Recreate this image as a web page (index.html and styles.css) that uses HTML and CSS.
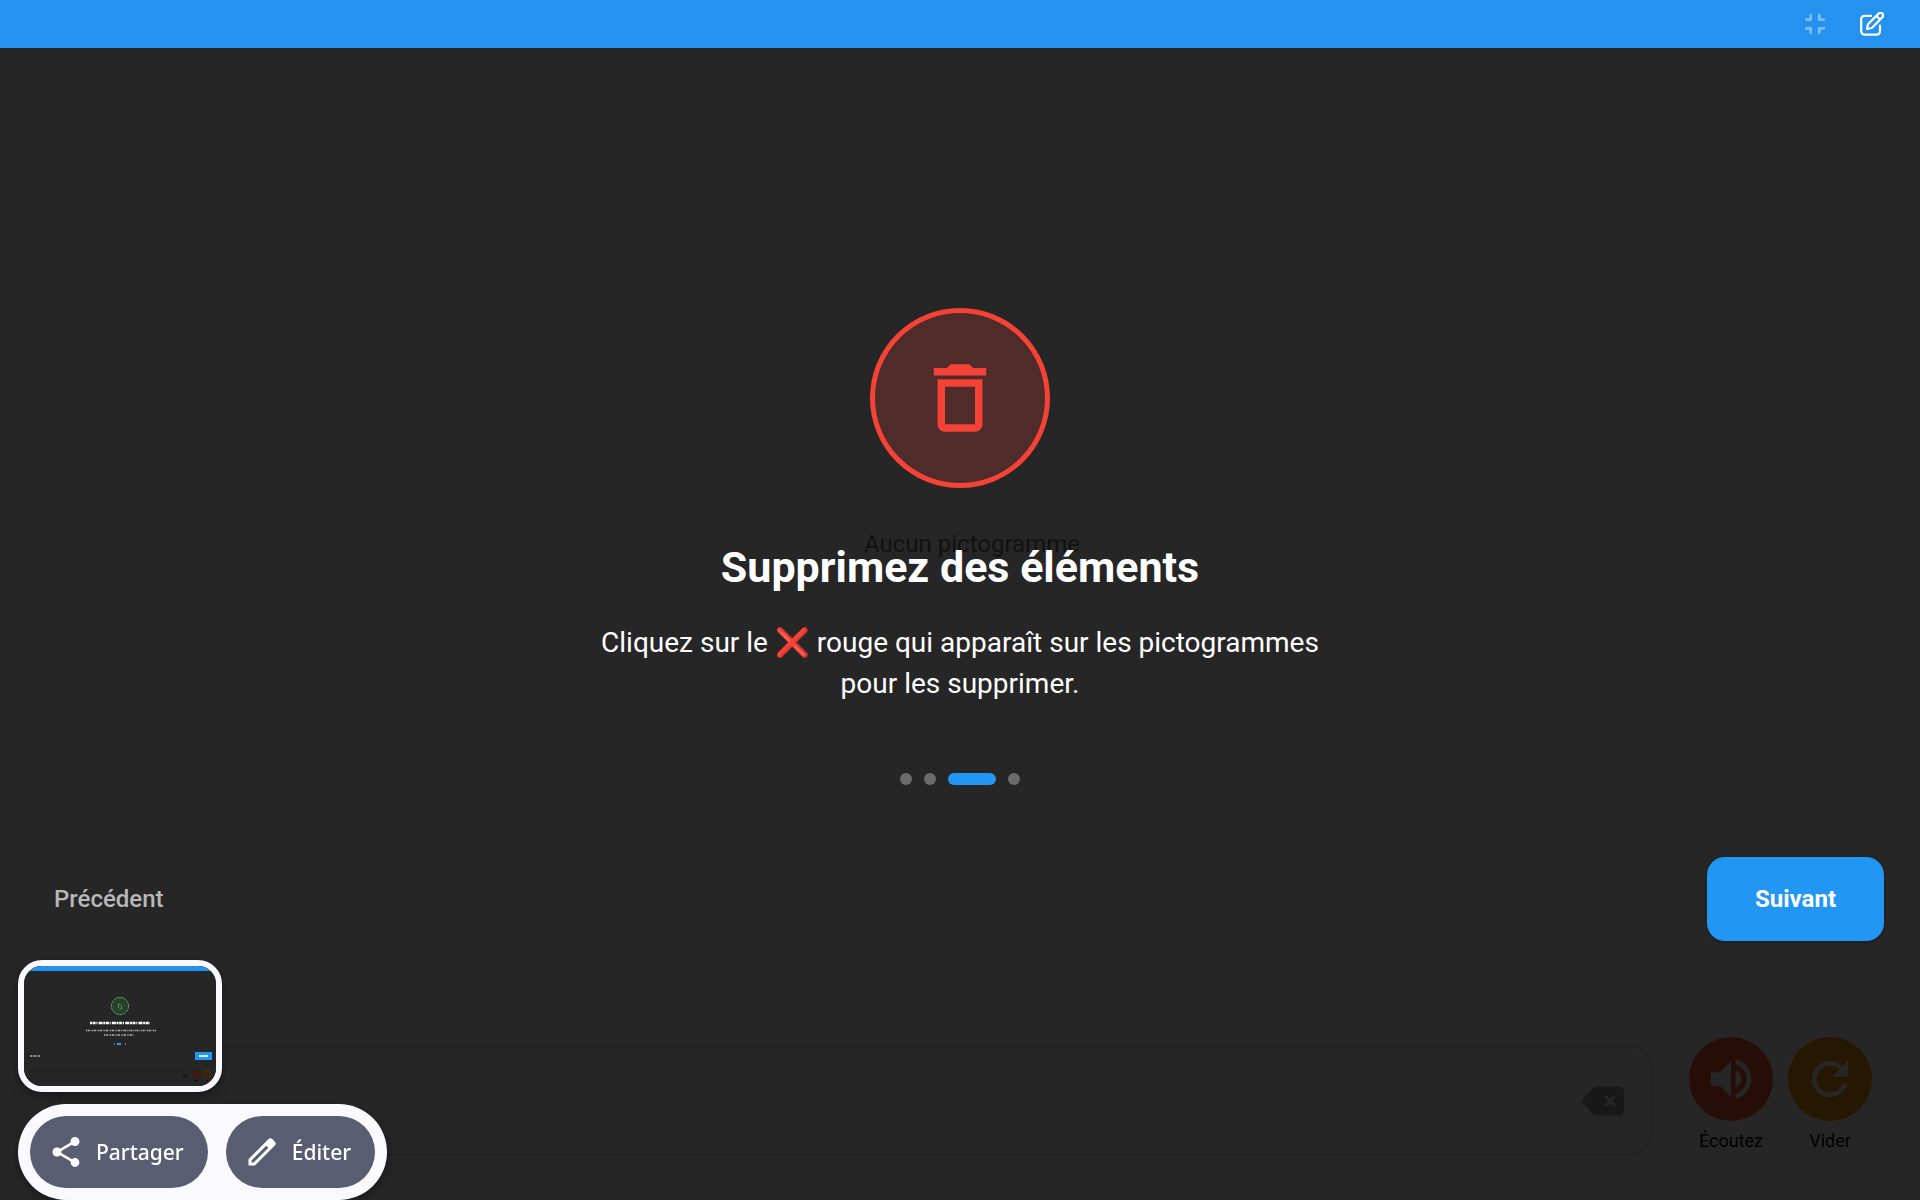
FILE: index.html
```
<!DOCTYPE html>
<html lang="fr">
<head>
<meta charset="utf-8">
<title>Supprimez des éléments</title>
<link rel="stylesheet" href="styles.css">
</head>

<body>
<header class="topbar">
	<button class="icon-btn dim" type="button" aria-label="Quitter le plein écran">
		<svg width="24" height="24" viewBox="0 0 24 24" fill="none" stroke="currentColor" stroke-width="2.8" stroke-linecap="round" stroke-linejoin="round"><path d="M3.2 7.600h4.500v-4.400M16.300 3.200v4.400h4.500M3.200 16.400h4.500v4.400M16.300 20.800v-4.400h4.500"/></svg>
	</button>
	<button class="icon-btn" type="button" aria-label="Modifier">
		<svg width="24" height="24" viewBox="0 0 24 24" fill="none" stroke="currentColor" stroke-width="2.200" stroke-linecap="round" stroke-linejoin="round"><path d="M11 3.800H4.500A3.300 3.300 0 0 0 1.200 7.100v12.200a3.300 3.300 0 0 0 3.300 3.300h12.200a3.300 3.300 0 0 0 3.300-3.300V13.500"/><path d="M7 17l1-4.800L18.600 1.600a2.500 2.500 0 0 1 3.700 3.700L11.800 16zM16.500 4l3.500 3.500"/></svg>
	</button>
</header>

<div class="screen">
	<!-- écran de composition, sous le voile -->
	<main class="board">
		<p class="empty">Aucun pictogramme</p>
	</main>
	<footer class="composer">
		<div class="phrase">
			<button class="erase" type="button" aria-label="Effacer">
				<svg width="42" height="30" viewBox="0 0 42 30"><path d="M15 .5h22a5 5 0 0 1 5 5v19a5 5 0 0 1-5 5H15a6 6 0 0 1-4-1.600L1 17a3 3 0 0 1 0-4L11 2.100A6 6 0 0 1 15 .5z" fill="currentColor"/><path d="M24 11l8 8M32 11l-8 8" stroke="#fff" stroke-width="3" stroke-linecap="round"/></svg>
			</button>
		</div>
		<div class="keys">
			<button class="key listen" type="button">
				<span class="disc"><svg width="54" height="54" viewBox="0 0 24 24"><path d="M3 9v6h4l5 5V4L7 9H3zm13.500 3c0-1.770-1.020-3.290-2.500-4.030v8.050c1.480-.73 2.500-2.250 2.500-4.020zM14 3.230v2.060c2.890.86 5 3.540 5 6.710s-2.110 5.850-5 6.710v2.060c4.010-.91 7-4.490 7-8.770s-2.990-7.860-7-8.770z"/></svg></span>
				Écoutez
			</button>
			<button class="key clear" type="button">
				<span class="disc"><svg width="54" height="54" viewBox="0 0 24 24"><path d="M17.650 6.350C16.200 4.900 14.210 4 12 4c-4.420 0-7.990 3.580-7.990 8s3.570 8 7.990 8c3.730 0 6.840-2.550 7.730-6h-2.080c-.82 2.330-3.040 4-5.650 4-3.310 0-6-2.690-6-6s2.690-6 6-6c1.660 0 3.140.69 4.220 1.780L13 11h7V4l-2.350 2.350z"/></svg></span>
				Vider
			</button>
		</div>
	</footer>

	<!-- tutoriel -->
	<section class="tutorial">
		<div class="badge">
			<svg width="90" height="90" viewBox="0 0 24 24"><path d="M6 19c0 1.100.9 2 2 2h8c1.100 0 2-.9 2-2V7H6v12zM8 9h8v10H8V9zm7.500-5l-1-1h-5l-1 1H5v2h14V4h-3.500z"/></svg>
		</div>
		<h1>Supprimez des éléments</h1>
		<p class="text">Cliquez sur le ❌ rouge qui apparaît sur les pictogrammes pour les supprimer.</p>
		<div class="dots">
			<i></i>
			<i></i>
			<i class="on"></i>
			<i></i>
		</div>
		<nav class="steps">
			<button class="prev" type="button">Précédent</button>
			<button class="next" type="button">Suivant</button>
		</nav>
	</section>
</div>

<!-- aperçu de la capture -->
<aside class="capture">
	<svg class="thumb" viewBox="0 0 192 120">
		<path d="M0 0h192v120H0z" fill="#262626"/>
		<path d="M0 0h192v5H0z" fill="#2592f0"/>
		<circle cx="96" cy="40" r="8.600" fill="#2b3f2c" stroke="#4caf50" stroke-dasharray="3 .7"/>
		<path d="M94.500 42v-4h2M97.500 39v4h-2" fill="none" stroke="#4caf50" stroke-width=".8"/>
		<path d="M66 57h60" stroke="#fff" stroke-width="2.500" stroke-dasharray="2 .6 3 .8 1 1.200 4 .7"/>
		<path d="M62 64.500h70M80 69h30" stroke="#bbb" stroke-width="1.400" stroke-dasharray="1 .7 2 1 .6 .8"/>
		<path d="M90 78h1M101 78h1" stroke="#777" stroke-width="2"/>
		<path d="M93 78h4" stroke="#2196f3" stroke-width="2"/>
		<path d="M6 90h10" stroke="#aaa" stroke-width="1.500" stroke-dasharray="2 .5 1 .5"/>
		<path d="M171 86h17v8h-17z" fill="#2196f3"/>
		<path d="M175 90h9" stroke="#fff" stroke-width="2" stroke-dasharray="2 .4"/>
		<rect x="6" y="104.500" width="158" height="11" rx="2" fill="none" stroke="#222"/>
		<path d="M159 110h4" stroke="#181818" stroke-width="3"/>
		<circle cx="173" cy="108" r="4.200" fill="#42160c"/>
		<circle cx="183" cy="108" r="4.200" fill="#422903"/>
		<circle cx="183" cy="108" r="1.800" fill="none" stroke="#262626"/>
		<path d="M171 108h4" stroke="#262626" stroke-width="2"/>
		<path d="M170 114.500h4M182 114.500h2" stroke="#0a0a0a"/>
	</svg>
	<div class="actions">
		<button type="button">
			<svg width="36" height="36" viewBox="0 0 24 24"><path d="M18 16.080c-.76 0-1.440.3-1.960.77L8.910 12.700c.05-.23.09-.46.09-.7s-.04-.47-.09-.7l7.050-4.110c.54.5 1.250.81 2.040.81 1.660 0 3-1.340 3-3s-1.340-3-3-3-3 1.340-3 3c0 .24.04.47.09.7L8.040 9.810C7.500 9.310 6.790 9 6 9c-1.660 0-3 1.340-3 3s1.340 3 3 3c.79 0 1.500-.31 2.040-.81l7.120 4.160c-.05.21-.08.43-.08.65 0 1.610 1.310 2.920 2.920 2.920s2.920-1.310 2.920-2.920-1.310-2.920-2.920-2.920z"/></svg>
			Partager
		</button>
		<button type="button">
			<svg width="36" height="36" viewBox="0 0 24 24"><path fill-rule="evenodd" d="M3 21v-4.250L16.200 3.580a2 2 0 0 1 2.850 0l1.370 1.400a2 2 0 0 1 0 2.800L7.250 21zM5 19h1.400l9.850-9.820-1.430-1.430L5 17.600z"/></svg>
			Éditer
		</button>
	</div>
</aside>
</body>
</html>
```
FILE: styles.css
```
*{box-sizing:border-box;margin:0;padding:0;}
body{display:flex;flex-direction:column;min-height:100vh;background:#fff;font-family:Roboto,"Liberation Sans",sans-serif;}
button{border:0;background:none;font:inherit;color:inherit;cursor:pointer;}
svg{display:block;fill:currentColor;}

/** barre du haut **/
.topbar{display:flex;justify-content:flex-end;align-items:center;gap:33px;height:48px;padding:0 36px;background:#2592f0;color:#fff;}
.topbar svg{fill:none;}
.dim{opacity:.4;}

/** écran de composition **/
.screen{position:relative;flex:1;display:flex;flex-direction:column;}
.board{flex:1;display:flex;align-items:center;justify-content:center;padding:3px 0 0 24px;}
.empty{font-size:24px;line-height:36px;color:#757575;}
.composer{display:flex;align-items:flex-end;gap:36px;padding:0 48px 44px 60px;}
.phrase{flex:1;display:flex;align-items:center;justify-content:flex-end;height:111px;padding-right:27px;border:2px solid #e0e0e0;border-radius:24px;}
.erase{color:#9e9e9e;}
.keys{display:flex;gap:15px;padding-bottom:3px;}
.key{display:flex;flex-direction:column;align-items:center;gap:8px;width:84px;font-size:18px;line-height:24px;color:#000;}
.disc{display:flex;align-items:center;justify-content:center;width:84px;height:84px;border-radius:50%;color:#fff;}
.listen .disc{background:#ff5722;}
.clear .disc{background:#ff9800;}

/** tutoriel **/
.tutorial{position:absolute;top:0;right:0;bottom:0;left:0;display:flex;flex-direction:column;align-items:center;justify-content:center;background:rgba(0,0,0,.85);color:#fff;text-align:center;}
.badge{display:flex;align-items:center;justify-content:center;width:180px;height:180px;border:5px solid #f44336;border-radius:50%;background:rgba(244,67,54,.2);color:#f44336;}
.tutorial h1{margin-top:48px;font-size:43px;line-height:62px;font-weight:700;}
.text{max-width:732px;margin-top:24px;font-size:28px;line-height:41px;}
.dots{display:flex;gap:12px;margin:69px 0 72px;}
.dots i{width:12px;height:12px;border-radius:6px;background:#6b6b6b;}
.dots .on{width:48px;background:#2196f3;}
.steps{display:flex;justify-content:space-between;align-items:center;align-self:stretch;padding:0 36px 0 30px;font-size:24px;line-height:36px;}
.prev{padding:24px;font-weight:500;color:#b8b8b8;}
.next{padding:24px 48px;border-radius:18px;background:#2196f3;font-weight:700;color:#fff;box-shadow:0 1px 3px rgba(0,0,0,.3);}

/** aperçu de la capture **/
.capture{position:fixed;left:18px;bottom:0;}
.thumb{width:204px;height:132px;border:6px solid #faf9ff;border-radius:24px;box-shadow:0 4px 10px rgba(0,0,0,.35);}
.actions{display:flex;gap:18px;margin-top:12px;padding:12px;border-radius:48px;background:#faf9ff;box-shadow:0 4px 10px rgba(0,0,0,.35);}
.actions button{display:flex;align-items:center;gap:12px;height:72px;padding:0 24px 0 18px;border-radius:36px;background:#585d71;color:#fff;font-family:"Noto Sans",sans-serif;font-size:21px;font-weight:500;}
```
